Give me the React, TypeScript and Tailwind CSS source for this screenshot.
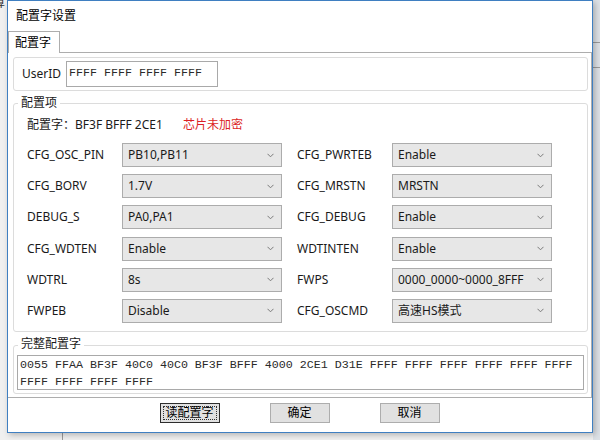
import React from "react";

const sans = { fontFamily: '"Noto Sans", "Noto Sans CJK SC", sans-serif' };

function Chevron() {
  return (
    <svg width="7" height="5" viewBox="0 0 7 5" className="shrink-0">
      <path d="M0.5 0.8 L3.5 3.8 L6.5 0.8" fill="none" stroke="#7a7a7a" strokeWidth="1" />
    </svg>
  );
}

function Select({ value }: { value: string }) {
  return (
    <div className="w-[160px] h-[24px] border border-[#acacac] bg-[#e7e7e7] flex items-center pl-[5px] pr-[7px] text-[12px] text-[#1a1a1a]">
      <span className="flex-1 whitespace-nowrap overflow-hidden">{value}</span>
      <Chevron />
    </div>
  );
}

function Field({ label, value }: { label: string; value: string }) {
  return (
    <div className="flex items-center">
      <div className="w-[95px] text-[12px] text-[#1a1a1a]">{label}</div>
      <Select value={value} />
    </div>
  );
}

const rows: [string, string, string, string][] = [
  ["CFG_OSC_PIN", "PB10,PB11", "CFG_PWRTEB", "Enable"],
  ["CFG_BORV", "1.7V", "CFG_MRSTN", "MRSTN"],
  ["DEBUG_S", "PA0,PA1", "CFG_DEBUG", "Enable"],
  ["CFG_WDTEN", "Enable", "WDTINTEN", "Enable"],
  ["WDTRL", "8s", "FWPS", "0000_0000~0000_8FFF"],
  ["FWPEB", "Disable", "CFG_OSCMD", "高速HS模式"],
];

export default function App() {
  return (
    <div className="relative w-[600px] h-[440px] overflow-hidden bg-[#f0f0f0]" style={sans}>
      {/* desktop bits */}
      <span className="absolute left-[-7px] top-[-6px] text-[12px] text-[#333]">算</span>
      <div className="absolute left-[593px] top-0 w-[7px] h-[440px] bg-[#dde1e6]">
        <div className="mt-[42px] h-[1px] bg-[#9a9a9a]" />
        <div className="mt-[24px] h-[1px] bg-[#9a9a9a]" />
      </div>
      <div className="absolute left-[62px] top-[433px] w-[1px] h-[7px] bg-[#9a9a9a]" />

      {/* dialog window */}
      <div className="absolute left-[7px] top-0 w-[586px] h-[433px] border border-[#3f7fc1] bg-white flex flex-col shadow-[2px_2px_6px_rgba(0,0,0,0.25)]">
        <div className="h-[30px] flex items-center pl-[8px] text-[12px] text-black">配置字设置</div>

        {/* tab strip */}
        <div className="flex h-[22px]">
          <div className="w-[52px] border-t border-l border-r border-[#adadad] flex items-center pl-[6px] text-[12px] text-black">
            配置字
          </div>
          <div className="flex-1 border-b border-[#adadad]" />
        </div>

        {/* tab panel */}
        <div className="h-[345px] border-r border-b border-[#adadad] flex flex-col pt-[4px] pl-[5px] pr-[3px]">
          {/* UserID */}
          <div className="h-[34px] border border-[#dcdcdc] rounded-[3px] flex items-center pl-[8px]">
            <span className="w-[44px] text-[12px] text-[#1a1a1a]">UserID</span>
            <div
              className="w-[152px] h-[26px] border border-[#a9a9a9] flex items-center pl-[2px] text-[11.67px] text-[#2a2a2a]"
              style={{ fontFamily: '"Liberation Mono", monospace' }}
            >
              FFFF FFFF FFFF FFFF
            </div>
          </div>

          {/* 配置项 */}
          <div className="relative mt-[12px] h-[229px] border border-[#dcdcdc] rounded-[3px] pt-[13px] pl-[13px]">
            <span className="absolute left-[4px] top-[-9px] px-[3px] bg-white text-[12px] leading-[16px] text-[#1a1a1a]">配置项</span>
            <div className="flex items-center h-[16px] text-[12px]">
              <span className="w-[156px] text-[#1a1a1a]">配置字：BF3F BFFF 2CE1</span>
              <span className="text-[#dc1f26]">芯片未加密</span>
            </div>
            <div className="mt-[10px] flex flex-col gap-[7.2px]">
              {rows.map((r) => (
                <div key={r[0]} className="flex gap-[15px]">
                  <Field label={r[0]} value={r[1]} />
                  <Field label={r[2]} value={r[3]} />
                </div>
              ))}
            </div>
          </div>

          {/* 完整配置字 */}
          <div className="relative mt-[13px] h-[49px] border border-[#dcdcdc] rounded-[3px] pt-[9px] pl-[3px]">
            <span className="absolute left-[4px] top-[-10px] px-[3px] bg-white text-[12px] leading-[16px] text-[#1a1a1a]">完整配置字</span>
            <div
              className="w-[567px] h-[35px] border border-[#a9a9a9] pl-[2px] pt-[1px] text-[11.67px] leading-[17px] text-[#2a2a2a]"
              style={{ fontFamily: '"Liberation Mono", monospace' }}
            >
              <div>0055 FFAA BF3F 40C0 40C0 BF3F BFFF 4000 2CE1 D31E FFFF FFFF FFFF FFFF FFFF FFFF</div>
              <div>FFFF FFFF FFFF FFFF</div>
            </div>
          </div>
        </div>

        {/* buttons */}
        <div className="mt-[5px] flex justify-center gap-[50px] pr-[1px]">
          <div className="w-[60px] h-[20px] border border-[#2d2d2d] bg-[#e1e1e1] p-[2px]">
            <div className="w-full h-full border border-dotted border-[#333] flex items-center justify-center text-[12px] text-black">
              读配置字
            </div>
          </div>
          <div className="w-[60px] h-[20px] border border-[#adadad] bg-[#e1e1e1] flex items-center justify-center text-[12px] text-black">
            确定
          </div>
          <div className="w-[60px] h-[20px] border border-[#adadad] bg-[#e1e1e1] flex items-center justify-center text-[12px] text-black">
            取消
          </div>
        </div>
      </div>
    </div>
  );
}
